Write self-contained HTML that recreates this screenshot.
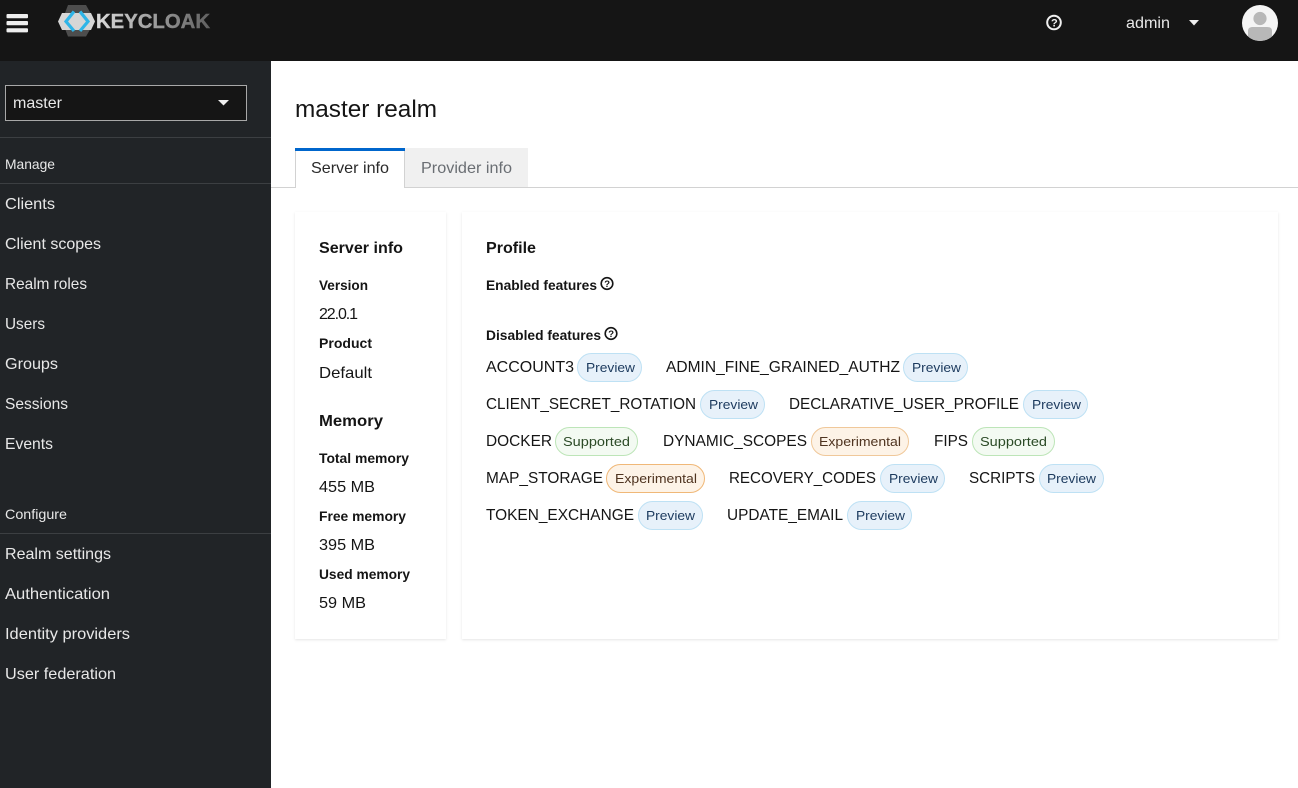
<!DOCTYPE html>
<html><head><meta charset="utf-8"><title>Keycloak</title>
<style>
html,body{margin:0;padding:0;background:#fff;width:1298px;height:788px;overflow:hidden}
svg{display:block}
text{font-family:"Liberation Sans",sans-serif;font-size:16px;fill:#151515}
.s{fill:#e8e8e8}
.m{font-size:14px;fill:#e8e8e8}
.b{font-weight:700;font-size:14px}
.h{font-weight:700;font-size:16px}
.t{font-size:13px;fill:#1c3a5e}
.sup{font-size:13px;fill:#2b4a26}
.exp{font-size:13px;fill:#4f3420}
</style></head><body>
<svg width="1298" height="788" viewBox="0 0 1298 788" xmlns="http://www.w3.org/2000/svg">
<defs>
<linearGradient id="kc" x1="0" x2="1" y1="0" y2="0"><stop offset="0" stop-color="#dcdcdc"/><stop offset="1" stop-color="#606060"/></linearGradient>
<filter id="sh" x="-5%" y="-5%" width="110%" height="110%"><feDropShadow dx="0" dy="1" stdDeviation="1.2" flood-color="#000" flood-opacity=".1"/></filter>
</defs>
<rect width="1298" height="788" fill="#fff"/>
<rect width="271" height="727" y="61" fill="#212427"/>
<rect width="1298" height="61" fill="#151515"/>

<!-- hamburger -->
<rect x="6.500" y="14" width="21.500" height="4.200" rx="1" fill="#eee"/><rect x="6.500" y="21" width="21.500" height="4.200" rx="1" fill="#eee"/><rect x="6.500" y="28.200" width="21.500" height="4.200" rx="1" fill="#eee"/>

<!-- logo -->
<path d="M68 5H86L95 21L86 36.500H68L62 21Z" fill="#4d4d4d"/>
<path d="M62 13H91L95 21.500L91 30H62L58 21.500Z" fill="#d6d6d6"/>
<path d="M74 11.500L66 21.500L74 31" fill="none" stroke="#2fb5e8" stroke-width="3.200"/>
<path d="M80 11.500L88 21.500L80 31" fill="none" stroke="#2fb5e8" stroke-width="3.200"/>
<text x="96" y="28" style="font-size:20.500px;font-weight:700;fill:url(#kc);stroke:url(#kc);stroke-width:.4" textLength="114" lengthAdjust="spacingAndGlyphs">KEYCLOAK</text>

<!-- header right -->
<circle cx="1054" cy="22.500" r="6.800" fill="none" stroke="#f0f0f0" stroke-width="2"/>
<text x="1051" y="26.500" style="font-size:11px;font-weight:700;fill:#f0f0f0">?</text>
<text x="1126" y="28" class="s" textLength="44" lengthAdjust="spacingAndGlyphs">admin</text>
<path d="M1189 20H1199L1194 25.500Z" fill="#f0f0f0"/>
<clipPath id="av"><circle cx="1260" cy="23" r="18"/></clipPath>
<circle cx="1260" cy="23" r="18" fill="#f5f5f5"/>
<g clip-path="url(#av)"><circle cx="1260" cy="18.500" r="6.600" fill="#b8b8b8"/><path d="M1248 42V31C1248 28 1250 27 1253 27H1267C1270 27 1272 28 1272 31V42Z" fill="#b8b8b8"/></g>

<!-- realm select -->
<rect x="5.500" y="85.500" width="241" height="35" fill="#151515" stroke="#a8a8a8"/>
<text x="13" y="108" class="s" textLength="49" lengthAdjust="spacingAndGlyphs">master</text>
<path d="M218 100H229L223.500 105.500Z" fill="#f0f0f0"/>

<!-- sidebar -->
<rect x="0" y="137" width="271" height="1" fill="#3c3f42"/>
<rect x="0" y="183" width="271" height="1" fill="#3c3f42"/>
<rect x="0" y="533" width="271" height="1" fill="#3c3f42"/>
<text x="5" y="169" class="m" textLength="50" lengthAdjust="spacingAndGlyphs">Manage</text>
<text x="5" y="209" class="s" textLength="50" lengthAdjust="spacingAndGlyphs">Clients</text>
<text x="5" y="249" class="s" textLength="96" lengthAdjust="spacingAndGlyphs">Client scopes</text>
<text x="5" y="289" class="s" textLength="82" lengthAdjust="spacingAndGlyphs">Realm roles</text>
<text x="5" y="329" class="s" textLength="40" lengthAdjust="spacingAndGlyphs">Users</text>
<text x="5" y="369" class="s" textLength="53" lengthAdjust="spacingAndGlyphs">Groups</text>
<text x="5" y="409" class="s" textLength="63" lengthAdjust="spacingAndGlyphs">Sessions</text>
<text x="5" y="449" class="s" textLength="48" lengthAdjust="spacingAndGlyphs">Events</text>
<text x="5" y="519" class="m" textLength="62" lengthAdjust="spacingAndGlyphs">Configure</text>
<text x="5" y="559" class="s" textLength="106" lengthAdjust="spacingAndGlyphs">Realm settings</text>
<text x="5" y="599" class="s" textLength="105" lengthAdjust="spacingAndGlyphs">Authentication</text>
<text x="5" y="639" class="s" textLength="125" lengthAdjust="spacingAndGlyphs">Identity providers</text>
<text x="5" y="679" class="s" textLength="111" lengthAdjust="spacingAndGlyphs">User federation</text>

<!-- title -->
<text x="295" y="117" style="font-size:24px" textLength="142" lengthAdjust="spacingAndGlyphs">master realm</text>

<!-- tabs -->
<rect x="271" y="187" width="1027" height="1" fill="#d2d2d2"/>
<rect x="405" y="148" width="123" height="39" fill="#f0f0f0"/>
<rect x="295" y="148" width="110" height="40" fill="#fff"/>
<rect x="295" y="149" width="1" height="39" fill="#d2d2d2"/>
<rect x="404" y="149" width="1" height="39" fill="#d2d2d2"/>
<rect x="295" y="148" width="110" height="3" fill="#0066cc"/>
<text x="311" y="173" textLength="78" lengthAdjust="spacingAndGlyphs" style="fill:#2a2a2a">Server info</text>
<text x="421" y="173" textLength="91" lengthAdjust="spacingAndGlyphs" style="fill:#6a6e73">Provider info</text>

<!-- cards -->
<rect x="295" y="212" width="151" height="427" fill="#fff" filter="url(#sh)"/>
<rect x="462" y="212" width="816" height="427" fill="#fff" filter="url(#sh)"/>

<!-- left card -->
<text x="319" y="253" class="h" textLength="84" lengthAdjust="spacingAndGlyphs">Server info</text>
<text x="319" y="290" class="b" textLength="49" lengthAdjust="spacingAndGlyphs">Version</text>
<text x="319" y="319" textLength="39" lengthAdjust="spacing">22.0.1</text>
<text x="319" y="348" class="b" textLength="53" lengthAdjust="spacingAndGlyphs">Product</text>
<text x="319" y="378" textLength="53" lengthAdjust="spacingAndGlyphs">Default</text>
<text x="319" y="426" class="h" textLength="64" lengthAdjust="spacingAndGlyphs">Memory</text>
<text x="319" y="463" class="b" textLength="90" lengthAdjust="spacingAndGlyphs">Total memory</text>
<text x="319" y="492" textLength="56" lengthAdjust="spacingAndGlyphs">455 MB</text>
<text x="319" y="521" class="b" textLength="87" lengthAdjust="spacingAndGlyphs">Free memory</text>
<text x="319" y="550" textLength="56" lengthAdjust="spacingAndGlyphs">395 MB</text>
<text x="319" y="579" class="b" textLength="91" lengthAdjust="spacingAndGlyphs">Used memory</text>
<text x="319" y="608" textLength="47" lengthAdjust="spacingAndGlyphs">59 MB</text>

<!-- right card -->
<text x="486" y="253" class="h" textLength="50" lengthAdjust="spacingAndGlyphs">Profile</text>
<text x="486" y="290" class="b" textLength="111" lengthAdjust="spacingAndGlyphs">Enabled features</text>
<circle cx="607" cy="283.500" r="5.800" fill="none" stroke="#151515" stroke-width="1.600"/>
<text x="604.300" y="287" style="font-size:9.500px;font-weight:700">?</text>
<text x="486" y="340" class="b" textLength="115" lengthAdjust="spacingAndGlyphs">Disabled features</text>
<circle cx="611" cy="333.500" r="5.800" fill="none" stroke="#151515" stroke-width="1.600"/>
<text x="608.300" y="337" style="font-size:9.500px;font-weight:700">?</text>

<!-- row 1 -->
<text x="486" y="372" textLength="88" lengthAdjust="spacingAndGlyphs">ACCOUNT3</text>
<rect x="577.500" y="353.500" width="64" height="28" rx="14" fill="#e7f1fa" stroke="#bee1f4"/>
<text x="586" y="372" class="t" textLength="49" lengthAdjust="spacingAndGlyphs">Preview</text>
<text x="666" y="372" textLength="234" lengthAdjust="spacingAndGlyphs">ADMIN_FINE_GRAINED_AUTHZ</text>
<rect x="903.500" y="353.500" width="64" height="28" rx="14" fill="#e7f1fa" stroke="#bee1f4"/>
<text x="912" y="372" class="t" textLength="49" lengthAdjust="spacingAndGlyphs">Preview</text>

<!-- row 2 -->
<text x="486" y="409" textLength="210" lengthAdjust="spacingAndGlyphs">CLIENT_SECRET_ROTATION</text>
<rect x="700.500" y="390.500" width="64" height="28" rx="14" fill="#e7f1fa" stroke="#bee1f4"/>
<text x="709" y="409" class="t" textLength="49" lengthAdjust="spacingAndGlyphs">Preview</text>
<text x="789" y="409" textLength="230" lengthAdjust="spacingAndGlyphs">DECLARATIVE_USER_PROFILE</text>
<rect x="1023.500" y="390.500" width="64" height="28" rx="14" fill="#e7f1fa" stroke="#bee1f4"/>
<text x="1032" y="409" class="t" textLength="49" lengthAdjust="spacingAndGlyphs">Preview</text>

<!-- row 3 -->
<text x="486" y="446" textLength="66" lengthAdjust="spacingAndGlyphs">DOCKER</text>
<rect x="555.500" y="427.500" width="82" height="28" rx="14" fill="#f3faf2" stroke="#bde5b8"/>
<text x="563" y="446" class="sup" textLength="67" lengthAdjust="spacingAndGlyphs">Supported</text>
<text x="663" y="446" textLength="144" lengthAdjust="spacingAndGlyphs">DYNAMIC_SCOPES</text>
<rect x="811.500" y="427.500" width="97" height="28" rx="14" style="fill:#fdf3e7;stroke:#f0c89a"/>
<text x="819" y="446" class="exp" textLength="82" lengthAdjust="spacingAndGlyphs">Experimental</text>
<text x="934" y="446" textLength="34" lengthAdjust="spacingAndGlyphs">FIPS</text>
<rect x="972.500" y="427.500" width="82" height="28" rx="14" fill="#f3faf2" stroke="#bde5b8"/>
<text x="980" y="446" class="sup" textLength="67" lengthAdjust="spacingAndGlyphs">Supported</text>

<!-- row 4 -->
<text x="486" y="483" textLength="117" lengthAdjust="spacingAndGlyphs">MAP_STORAGE</text>
<rect x="606.500" y="464.500" width="98" height="28" rx="14" style="fill:#fdf3e7;stroke:#f0b878"/>
<text x="615" y="483" class="exp" textLength="82" lengthAdjust="spacingAndGlyphs">Experimental</text>
<text x="729" y="483" textLength="147" lengthAdjust="spacingAndGlyphs">RECOVERY_CODES</text>
<rect x="880.500" y="464.500" width="64" height="28" rx="14" fill="#e7f1fa" stroke="#bee1f4"/>
<text x="889" y="483" class="t" textLength="49" lengthAdjust="spacingAndGlyphs">Preview</text>
<text x="969" y="483" textLength="66" lengthAdjust="spacingAndGlyphs">SCRIPTS</text>
<rect x="1039.500" y="464.500" width="64" height="28" rx="14" fill="#e7f1fa" stroke="#bee1f4"/>
<text x="1047" y="483" class="t" textLength="49" lengthAdjust="spacingAndGlyphs">Preview</text>

<!-- row 5 -->
<text x="486" y="520" textLength="148" lengthAdjust="spacingAndGlyphs">TOKEN_EXCHANGE</text>
<rect x="638.500" y="501.500" width="64" height="28" rx="14" fill="#e7f1fa" stroke="#bee1f4"/>
<text x="646" y="520" class="t" textLength="49" lengthAdjust="spacingAndGlyphs">Preview</text>
<text x="727" y="520" textLength="116" lengthAdjust="spacingAndGlyphs">UPDATE_EMAIL</text>
<rect x="847.500" y="501.500" width="64" height="28" rx="14" fill="#e7f1fa" stroke="#bee1f4"/>
<text x="856" y="520" class="t" textLength="49" lengthAdjust="spacingAndGlyphs">Preview</text>
</svg>
</body></html>
